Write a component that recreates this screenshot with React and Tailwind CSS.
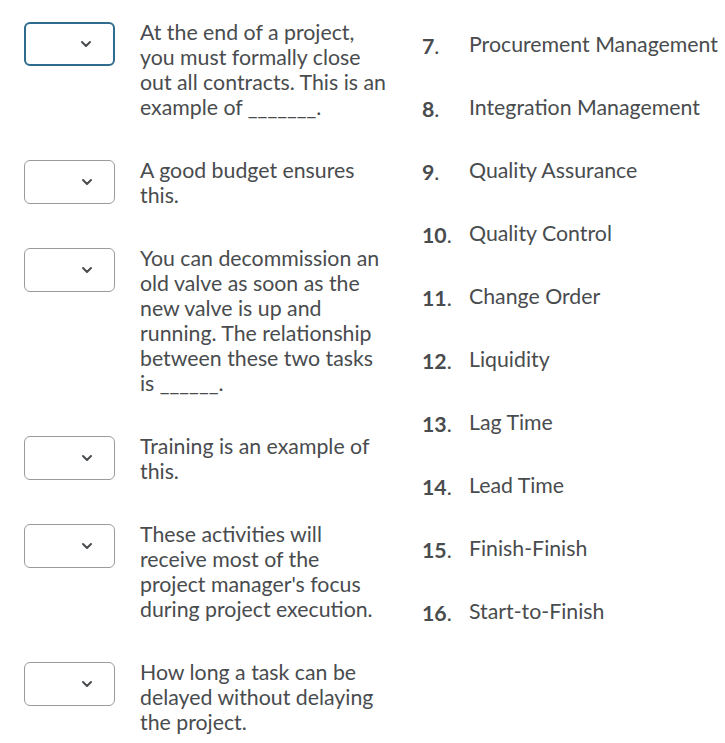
import { ChevronDown } from 'lucide-react';

const questions = [
  { text: 'At the end of a project, you must formally close out all contracts. This is an example of _______.', focused: true },
  { text: 'A good budget ensures this.' },
  { text: 'You can decommission an old valve as soon as the new valve is up and running. The relationship between these two tasks is ______.' },
  { text: 'Training is an example of this.' },
  { text: "These activities will receive most of the project manager's focus during project execution." },
  { text: 'How long a task can be delayed without delaying the project.' },
];

const answers = [
  'Procurement Management',
  'Integration Management',
  'Quality Assurance',
  'Quality Control',
  'Change Order',
  'Liquidity',
  'Lag Time',
  'Lead Time',
  'Finish-Finish',
  'Start-to-Finish',
];

function Select({ focused }) {
  return (
    <div
      className={`mt-[2px] w-[91px] h-[44px] shrink-0 rounded-[6px] bg-white flex items-center justify-end pr-[19px] ${
        focused ? 'border-2 border-[#2f6b8e]' : 'border border-[#9a9a9a]'
      }`}
    >
      <ChevronDown className="w-[16px] h-[16px] text-[#494c4e]" strokeWidth={3} />
    </div>
  );
}

export default function App() {
  return (
    <div
      className="w-[725px] h-[743px] bg-white overflow-hidden flex text-[#494c4e]"
      style={{ fontFamily: 'Lato, "Open Sans", sans-serif' }}
    >
      <div className="flex flex-col gap-[38px] pl-[24px] pt-[20px] w-[398px] shrink-0">
        {questions.map((q, i) => (
          <div key={i} className="flex items-start gap-[25px]">
            <Select focused={q.focused} />
            <p className="w-[249px] text-[21.3px] leading-[25px]">{q.text}</p>
          </div>
        ))}
      </div>
      <div className="flex flex-col pt-[20px]">
        {answers.map((a, i) => (
          <div key={a} className="flex items-baseline h-[63px] pt-[12px] pl-[24px]">
            <span className="w-[47px] shrink-0 text-[21.3px] leading-[25px] translate-y-[2px]">
              <span className="font-bold">{i + 7}</span>.
            </span>
            <span className="text-[21.3px] leading-[25px] whitespace-nowrap">{a}</span>
          </div>
        ))}
      </div>
    </div>
  );
}
